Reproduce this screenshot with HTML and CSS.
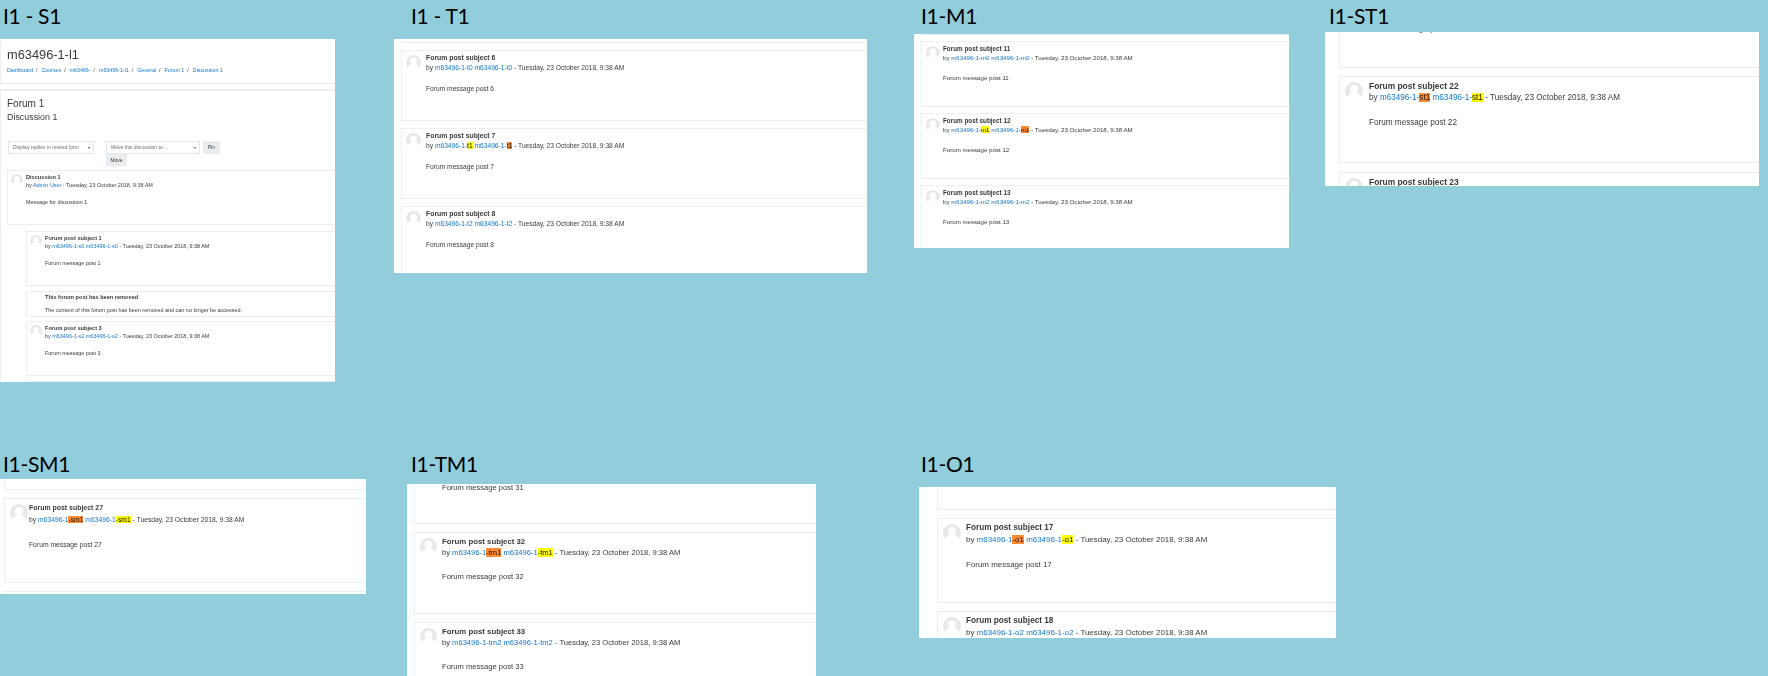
FILE: index.html
```html
<!DOCTYPE html>
<html lang="en">
<head>
  <meta charset="UTF-8" />
  <title>Forum post highlights</title>
  <link rel="stylesheet" href="styles.css">
</head>
<body>
  <svg class="defs" width="0" height="0">
    <symbol id="user" viewBox="0 0 100 100">
      <circle cx="50" cy="50" r="50" fill="#e8e8e8" />
      <circle cx="50" cy="39" r="23" fill="#fff" />
      <path d="M12 86c4-18 19-27 38-27s34 9 38 27c-9 9-24 14-38 14s-29-5-38-14z" fill="#fff" />
    </symbol>
  </svg>

  <div class="label label-s1">I1 - S1</div>
  <div class="shot shot-s1">
    <div class="page-head">
      <h1>m63496-1-l1</h1>
      <div class="crumbs">
        <a>Dashboard</a><i>/</i><a>Courses</a><i>/</i><a>m63496-</a><i>/</i><a>m63496-1-l1</a><i>/</i><a>General</a><i>/</i><a>Forum 1</a><i>/</i><a>Discussion 1</a>
      </div>
    </div>
    <div class="page-main">
      <h2>Forum 1</h2>
      <h3>Discussion 1</h3>
      <div class="controls">
        <div class="select select-a">Display replies in nested form</div>
        <div class="select select-b">Move this discussion to ...</div>
        <div class="btn">Pin</div>
        <div class="btn btn-move">Move</div>
      </div>
      <div class="post post-first">
        <svg class="avatar"><use href="#user" /></svg>
        <div class="subject">Discussion 1</div>
        <div class="by">by <a>Admin User</a> - Tuesday, 23 October 2018, 9:38 AM</div>
        <div class="msg">Message for discussion 1</div>
      </div>
      <div class="replies">
        <div class="post">
          <svg class="avatar"><use href="#user" /></svg>
          <div class="subject">Forum post subject 1</div>
          <div class="by">by <a>m63496-1-s0</a> <a>m63496-1-s0</a> - Tuesday, 23 October 2018, 9:38 AM</div>
          <div class="msg">Forum message post 1</div>
        </div>
        <div class="post post-removed">
          <div class="subject">This forum post has been removed</div>
          <div class="msg">The content of this forum post has been removed and can no longer be accessed.</div>
        </div>
        <div class="post">
          <svg class="avatar"><use href="#user" /></svg>
          <div class="subject">Forum post subject 3</div>
          <div class="by">by <a>m63496-1-s2</a> <a>m63496-1-s2</a> - Tuesday, 23 October 2018, 9:38 AM</div>
          <div class="msg">Forum message post 3</div>
        </div>
        <div class="post"></div>
      </div>
    </div>
  </div>

  <div class="label label-t1">I1 - T1</div>
  <div class="shot shot-t1">
    <div class="post"></div>
    <div class="post">
      <svg class="avatar"><use href="#user" /></svg>
      <div class="subject">Forum post subject 6</div>
      <div class="by">by <a>m63496-1-t0</a> <a>m63496-1-t0</a> - Tuesday, 23 October 2018, 9:38 AM</div>
      <div class="msg">Forum message post 6</div>
    </div>
    <div class="post">
      <svg class="avatar"><use href="#user" /></svg>
      <div class="subject">Forum post subject 7</div>
      <div class="by">by <a>m63496-1-<mark>t1</mark></a> <a>m63496-1-<mark class="alt">t1</mark></a> - Tuesday, 23 October 2018, 9:38 AM</div>
      <div class="msg">Forum message post 7</div>
    </div>
    <div class="post">
      <svg class="avatar"><use href="#user" /></svg>
      <div class="subject">Forum post subject 8</div>
      <div class="by">by <a>m63496-1-t2</a> <a>m63496-1-t2</a> - Tuesday, 23 October 2018, 9:38 AM</div>
      <div class="msg">Forum message post 8</div>
    </div>
  </div>

  <div class="label label-m1">I1-M1</div>
  <div class="shot shot-m1">
    <div class="post"></div>
    <div class="post">
      <svg class="avatar"><use href="#user" /></svg>
      <div class="subject">Forum post subject 11</div>
      <div class="by">by <a>m63496-1-m0</a> <a>m63496-1-m0</a> - Tuesday, 23 October 2018, 9:38 AM</div>
      <div class="msg">Forum message post 11</div>
    </div>
    <div class="post">
      <svg class="avatar"><use href="#user" /></svg>
      <div class="subject">Forum post subject 12</div>
      <div class="by">by <a>m63496-1-<mark>m1</mark></a> <a>m63496-1-<mark class="alt">m1</mark></a> - Tuesday, 23 October 2018, 9:38 AM</div>
      <div class="msg">Forum message post 12</div>
    </div>
    <div class="post">
      <svg class="avatar"><use href="#user" /></svg>
      <div class="subject">Forum post subject 13</div>
      <div class="by">by <a>m63496-1-m2</a> <a>m63496-1-m2</a> - Tuesday, 23 October 2018, 9:38 AM</div>
      <div class="msg">Forum message post 13</div>
    </div>
  </div>

  <div class="label label-st1">I1-ST1</div>
  <div class="shot shot-st1">
    <div class="post">
      <div class="msg msg-only">Forum message post 21</div>
    </div>
    <div class="post">
      <svg class="avatar"><use href="#user" /></svg>
      <div class="subject">Forum post subject 22</div>
      <div class="by">by <a>m63496-1-<mark class="alt">st1</mark></a> <a>m63496-1-<mark>st1</mark></a> - Tuesday, 23 October 2018, 9:38 AM</div>
      <div class="msg">Forum message post 22</div>
    </div>
    <div class="post">
      <svg class="avatar"><use href="#user" /></svg>
      <div class="subject">Forum post subject 23</div>
    </div>
  </div>

  <div class="label label-sm1">I1-SM1</div>
  <div class="shot shot-sm1">
    <div class="post"></div>
    <div class="post">
      <svg class="avatar"><use href="#user" /></svg>
      <div class="subject">Forum post subject 27</div>
      <div class="by">by <a>m63496-1<mark class="alt">-sm1</mark></a> <a>m63496-1<mark>-sm1</mark></a> - Tuesday, 23 October 2018, 9:38 AM</div>
      <div class="msg">Forum message post 27</div>
    </div>
    <div class="post"></div>
  </div>

  <div class="label label-tm1">I1-TM1</div>
  <div class="shot shot-tm1">
    <div class="post">
      <div class="msg msg-only">Forum message post 31</div>
    </div>
    <div class="post">
      <svg class="avatar"><use href="#user" /></svg>
      <div class="subject">Forum post subject 32</div>
      <div class="by">by <a>m63496-1<mark class="alt">-tm1</mark></a> <a>m63496-1<mark>-tm1</mark></a> - Tuesday, 23 October 2018, 9:38 AM</div>
      <div class="msg">Forum message post 32</div>
    </div>
    <div class="post">
      <svg class="avatar"><use href="#user" /></svg>
      <div class="subject">Forum post subject 33</div>
      <div class="by">by <a>m63496-1-tm2</a> <a>m63496-1-tm2</a> - Tuesday, 23 October 2018, 9:38 AM</div>
      <div class="msg">Forum message post 33</div>
    </div>
  </div>

  <div class="label label-o1">I1-O1</div>
  <div class="shot shot-o1">
    <div class="post"></div>
    <div class="post">
      <svg class="avatar"><use href="#user" /></svg>
      <div class="subject">Forum post subject 17</div>
      <div class="by">by <a>m63496-1<mark class="alt">-o1</mark></a> <a>m63496-1<mark>-o1</mark></a> - Tuesday, 23 October 2018, 9:38 AM</div>
      <div class="msg">Forum message post 17</div>
    </div>
    <div class="post">
      <svg class="avatar"><use href="#user" /></svg>
      <div class="subject">Forum post subject 18</div>
      <div class="by">by <a>m63496-1-o2</a> <a>m63496-1-o2</a> - Tuesday, 23 October 2018, 9:38 AM</div>
    </div>
  </div>
</body>
</html>
```

FILE: styles.css
```css
body {
  margin: 0;
  width: 1768px;
  height: 676px;
  position: relative;
  overflow: hidden;
  background-color: #92cddc;
  font-family: "Liberation Sans", Arial, sans-serif;
  color: #373a3c;
}
.defs {
  position: absolute;
}

/* captions above each screenshot */
.label {
  position: absolute;
  font-family: Lato, "Open Sans", sans-serif;
  font-size: 21px;
  line-height: 26px;
  letter-spacing: -0.3px;
  color: #000;
}
.label-s1 { left: 3px; top: 3px; }
.label-t1 { left: 411px; top: 3px; }
.label-m1 { left: 921px; top: 3px; }
.label-st1 { left: 1329px; top: 3px; }
.label-sm1 { left: 3px; top: 451px; }
.label-tm1 { left: 411px; top: 451px; }
.label-o1 { left: 921px; top: 451px; }

/* the pasted screenshots, each at its own scale:
   --fs font size, --v line step, --tx text indent in a post */
.shot {
  position: absolute;
  box-sizing: border-box;
  overflow: hidden;
  background-color: white;
  font-size: var(--fs);
  padding-left: var(--inset);
  display: flex;
  flex-direction: column;
  gap: var(--gap);
  filter: blur(0.3px);
}
.shot > .post:first-child {
  margin-top: var(--start);
}
.shot-s1 { left: 0; top: 39px; width: 335px; height: 343px; --fs: 5.45px; --v: 8px; --tx: 18px; --inset: 0px; --gap: 0px; --post-h: 55px; }
.shot-t1 { left: 394px; top: 39px; width: 473px; height: 234px; --fs: 6.67px; --v: 10px; --tx: 24px; --inset: 7px; --gap: 6.5px; --post-h: 71.5px; --start: -67.5px; }
.shot-m1 { left: 914px; top: 34px; width: 375px; height: 214px; --fs: 6.15px; --v: 9.2px; --tx: 21px; --inset: 7px; --gap: 6px; --post-h: 66px; --start: -65px; }
.shot-st1 { left: 1325px; top: 32px; width: 434px; height: 154px; --fs: 8.17px; --v: 12px; --tx: 29px; --inset: 14px; --gap: 8.5px; --post-h: 87px; --start: -51.5px; }
.shot-sm1 { left: 0; top: 479px; width: 366px; height: 115px; --fs: 6.75px; --v: 12px; --tx: 24px; --inset: 4px; --gap: 8px; --post-h: 85px; --start: -74px; }
.shot-tm1 { left: 407px; top: 484px; width: 409px; height: 192px; --fs: 7.58px; --v: 11.3px; --tx: 27px; --inset: 7px; --gap: 8.5px; --post-h: 81.5px; --start: -42px; }
.shot-o1 { left: 919px; top: 487px; width: 417px; height: 151px; --fs: 7.96px; --v: 12px; --tx: 28px; --inset: 18px; --gap: 8px; --post-h: 85px; --start: -62px; }

/* forum posts */
.post {
  position: relative;
  box-sizing: border-box;
  flex: none;
  height: var(--post-h);
  margin-right: -20px;
  padding: calc(var(--v) * 0.3 - 0.5px) 0 0 var(--tx);
  border: 1px solid #eceeef;
  line-height: var(--v);
}
.avatar {
  position: absolute;
  left: calc(var(--v) * 0.42);
  top: calc(var(--v) * 0.42);
  width: calc(var(--v) * 1.5);
  height: calc(var(--v) * 1.5);
}
.subject {
  font-size: 1.03em;
  font-weight: bold;
}
.msg {
  margin-top: calc(var(--v) * 1.1);
}
.msg-only {
  margin-top: calc(var(--v) * 3.1 + 1.5px);
}
a {
  color: #1177d1;
}
mark {
  background-color: #ff0;
  color: #111;
}
mark.alt {
  background-color: #ff8c33;
}

/* the full page in the first screenshot */
.page-head {
  flex: none;
  height: 44px;
  padding-left: 6px;
  border-bottom: 1px solid #eceeef;
  border-left: 1px solid #eceeef;
}
.page-head h1 {
  margin: 0;
  padding-top: 8px;
  font-size: 12.8px;
  font-weight: normal;
  line-height: 16px;
}
.crumbs {
  margin-top: 4px;
  font-size: 5.3px;
  line-height: 7px;
}
.crumbs i {
  font-style: normal;
  margin: 0 4px 0 3px;
}
.page-main {
  flex: none;
  margin-top: 5px;
  padding-left: 6px;
  border-top: 2px solid #eceeef;
  border-left: 1px solid #eceeef;
}
.page-main h2 {
  margin: 0;
  padding-top: 7px;
  font-size: 10px;
  font-weight: normal;
  line-height: 12px;
}
.page-main h3 {
  margin: 0;
  padding-top: 2px;
  font-size: 8.9px;
  font-weight: normal;
  line-height: 11px;
}
.controls {
  display: flex;
  flex-wrap: wrap;
  width: 216px;
  margin: 18px 0 4px 1px;
  font-size: 5px;
}
.select {
  box-sizing: border-box;
  height: 13px;
  padding-left: 4px;
  border: 1px solid #e4e6e8;
  color: #6b7073;
  line-height: 11px;
  position: relative;
}
.select::after {
  content: "";
  position: absolute;
  right: 3px;
  top: 5px;
  border: 1.5px solid transparent;
  border-top: 2px solid #555;
}
.select-a {
  width: 86px;
  margin-right: 12px;
}
.select-b {
  width: 94px;
  margin-right: 3px;
}
.btn {
  width: 17px;
  height: 13px;
  background-color: #e9ecef;
  text-align: center;
  line-height: 12px;
}
.btn-move {
  width: 21px;
  height: 12px;
  margin-left: 98px;
}
.replies {
  display: flex;
  flex-direction: column;
  gap: 4.5px;
  margin: 6px 0 0 19px;
}
.post-removed {
  height: 26px;
}
.post-removed .msg {
  margin-top: 5px;
}
```
